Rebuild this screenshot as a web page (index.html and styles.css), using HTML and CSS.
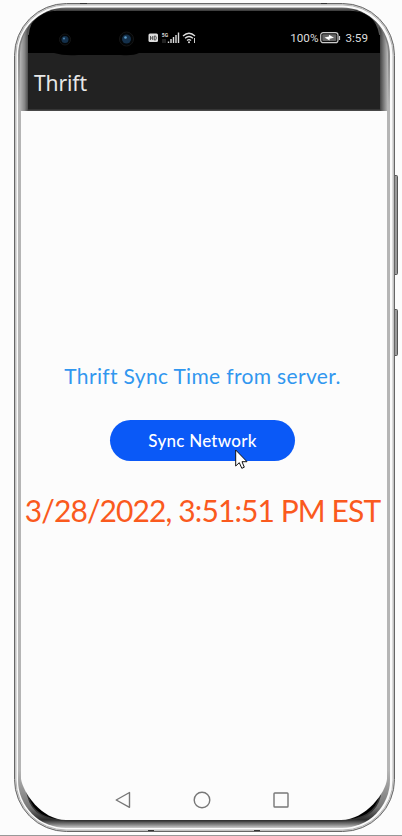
FILE: index.html
```html
<!DOCTYPE html>
<html lang="en">
<head>
<meta charset="utf-8">
<title>Thrift</title>
<link rel="stylesheet" href="styles.css">
</head>
<body>
<div class="stage">
<svg class="frame" width="402" height="836" viewBox="0 0 402 836" aria-hidden="true">
  <defs>
    <linearGradient id="rim" gradientUnits="userSpaceOnUse" x1="0" y1="7" x2="0" y2="828">
      <stop offset="0" stop-color="#888"/><stop offset=".005" stop-color="#222"/><stop offset=".03" stop-color="#777"/><stop offset=".12" stop-color="#b5b5b5"/><stop offset=".93" stop-color="#b5b5b5"/><stop offset=".975" stop-color="#777"/><stop offset=".99" stop-color="#2c2c2c"/><stop offset=".995" stop-color="#777"/><stop offset="1" stop-color="#ccc"/>
    </linearGradient>
    <linearGradient id="edgeL"><stop offset="0" stop-color="#b5b5b5"/><stop offset=".5" stop-color="#888"/><stop offset="1" stop-color="#3a3a3a"/></linearGradient>
    <linearGradient id="edgeR"><stop offset="0" stop-color="#333"/><stop offset=".5" stop-color="#777"/><stop offset="1" stop-color="#bbb"/></linearGradient>
    <clipPath id="glass"><rect x="20" y="9" width="368" height="816" rx="44"/></clipPath>
  </defs>
  <rect x="393.5" y="175.500" width="4" height="99" rx="1" fill="#999" stroke="#555"/>
  <rect x="393.500" y="309.500" width="4" height="46" rx="1" fill="#999" stroke="#555"/>
  <rect x="14.500" y="3.500" width="380" height="828" rx="52" fill="#d2d2d2" stroke="#666"/>
  <rect x="16" y="5" width="377" height="825" rx="50" fill="#fafafa" stroke="#aaa" stroke-width=".8"/>
  <rect x="18" y="7.500" width="372" height="820.500" rx="48" fill="url(#rim)"/>
  <g clip-path="url(#glass)">
    <rect x="20" y="8" width="9" height="103" fill="url(#edgeL)"/>
    <rect x="379" y="8" width="9" height="103" fill="url(#edgeR)"/>
    <path d="M28 111V35Q30 10 57 10H350Q376 10 380 35V111Z" fill="#222"/>
    <path d="M28 53V35Q30 10 57 10H350Q376 10 380 35V53Z" fill="#000"/>
    <path d="M28 35Q30 10 57 10H350Q376 10 380 35" fill="none" stroke="#555" stroke-width="1.500"/>
    <path d="M54 53Q64 56 78 55H121Q133 56 139 53Z" fill="#000"/>
    <rect x="28" y="109.500" width="352" height="1.500" fill="#484848"/>
    <path d="M28 796C32 813 47 820.500 67 820.500H340C362 820.500 376 813 380 796L382 780H24Z" fill="#000" stroke="#333" stroke-width="1.500"/>
    <path d="M21 111H387V779C386 792 366 820 341 820H66C41 820 23 792 21 779Z" fill="#fcfcfc"/>
  </g>
  <path d="M80 3.500H87M148 830.500H154M254 830.500H260M321 3.500H327" stroke="#333"/>
  <path d="M0 835.500H402" stroke="#999"/>
  <g fill="#030608" stroke="#151515">
    <circle cx="65" cy="39.500" r="5.500"/><circle cx="126.500" cy="39" r="7"/>
  </g>
  <circle cx="65" cy="39.500" r="3.500" fill="#14304b"/><circle cx="126.500" cy="39" r="4.500" fill="#14304b"/>
  <circle cx="64" cy="38.500" r="1" fill="#4f86b0"/><circle cx="125.500" cy="37.500" r="1.300" fill="#5c9bc9"/>
</svg>

<main class="screen">
  <header class="status">
    <svg class="signals" width="48" height="14" viewBox="0 0 48 14" aria-label="HD, 5G, Wi-Fi">
      <rect x=".5" y="2.500" width="9.500" height="8.500" rx="1.500" fill="#ddd"/>
      <path d="M2.500 5V9M4.700 5V9M2.500 7H4.700M6.300 5V9H7.200Q8.300 9 8.300 7T7.200 5Z" fill="none" stroke="#333" stroke-width=".8"/>
      <text x="13.800" y="5.500" class="tiny">5G</text>
      <path d="M15 8V12M17 8V12" stroke="#444"/>
      <path d="M20.500 12V10.500M23 12V8M25.500 12V6M28 12V4M30.500 12V1.500" stroke="#ddd" stroke-width="1.400"/>
      <path d="M35 5Q41 -.5 47 5M37 7.300Q41 3.800 45 7.300M39 9.400Q41 7.800 43 9.400" fill="none" stroke="#ddd" stroke-width="1.300"/>
      <circle cx="41" cy="11.300" r="1" fill="#ddd"/><path d="M46.500 7V12" stroke="#ccc"/>
    </svg>
    <span class="percent">100%</span>
    <svg class="battery" width="21" height="12" viewBox="0 0 21 12" aria-hidden="true">
      <rect x=".7" y=".7" width="17.300" height="10" rx="2.500" fill="#111" stroke="#ccc" stroke-width="1.200"/>
      <rect x="2.300" y="2.300" width="14" height="6.800" rx="1" fill="#666"/>
      <path d="M4.500 5.500L9 4.600V2.800L14 5.800L9.600 6.800V8.500Z" fill="#fff"/><path d="M19.500 4V8" stroke="#ccc" stroke-width="1.200"/>
    </svg>
    <span class="clock">3:59</span>
  </header>
  <h1 class="title">Thrift</h1>
  <section class="content">
    <p class="caption"><span>Thrift Sync Time from server.</span></p>
    <button class="sync"><span>Sync Network</span></button>
    <p class="time"><span>3/28/2022, 3:51:51 PM EST</span></p>
  </section>
  <nav class="nav">
    <svg width="16" height="18" viewBox="0 0 16 18"><path d="M14.500 1.500V16.300L1.200 9Z"/></svg>
    <svg width="18" height="18" viewBox="0 0 18 18"><circle cx="9" cy="9" r="7.800"/></svg>
    <svg width="16" height="16" viewBox="0 0 16 16"><rect x="1" y="1" width="14" height="14" rx=".8"/></svg>
  </nav>
</main>
<svg class="cursor" width="14" height="21" viewBox="0 0 14 21" aria-hidden="true"><path d="M.7 1V17L4.300 13.700L6.800 19.300L9.300 18.200L7 12.700H12Z" fill="#fff" stroke="#111"/></svg>
</div>
</body>
</html>
```
FILE: styles.css
```css
* { box-sizing: border-box; }
body { margin: 0; background: #fcfcfc; overflow: hidden; }
.stage { position: relative; width: 402px; height: 836px; }
.frame { position: absolute; inset: 0; }
.screen {
  position: relative;
  display: flex;
  flex-direction: column;
  width: 366px;
  height: 820px;
  margin-left: 21px;
  font-family: Lato, "Open Sans", sans-serif;
}
.status {
  display: flex;
  align-items: center;
  height: 53px;
  padding: 23px 19px 0 127px;
  color: #ddd;
  font: 11.700px/14px Roboto, sans-serif;
}
.signals { margin-right: auto; }
.tiny { font: bold 5px Roboto, sans-serif; fill: #ddd; }
.battery { margin: 0 4px 0 2px; }
.title {
  height: 58px;
  margin: 0;
  padding-left: 13px;
  color: #e8e8e8;
  font: 400 21px/61px "Noto Sans", sans-serif;
  letter-spacing: -.1px;
}
.content { display: flex; flex-direction: column; align-items: center; height: 668px; padding: 250px 3px 0 0; }
p { margin: 0; white-space: nowrap; }
.caption { height: 30px; color: #3197ef; font-size: 21px; line-height: 30px; letter-spacing: .34px; }
.sync {
  width: 185px;
  height: 41px;
  margin: 29px 0 0;
  padding: 0;
  border: 0;
  border-radius: 21px;
  background: #0a59f7;
  color: #fff;
  font: 500 17px/41px Lato, sans-serif;
  letter-spacing: .25px;
}
.time { height: 40px; margin-top: 29px; color: #fa5a1e; font-size: 30px; line-height: 40px; letter-spacing: -.9px; }
.nav { display: flex; align-items: center; justify-content: space-between; width: 174px; height: 18px; margin: 12px 0 0 94px; }
.nav svg { fill: none; stroke: #777; stroke-width: 1.400; stroke-linejoin: round; }
.cursor { position: absolute; left: 235px; top: 449px; }
```
